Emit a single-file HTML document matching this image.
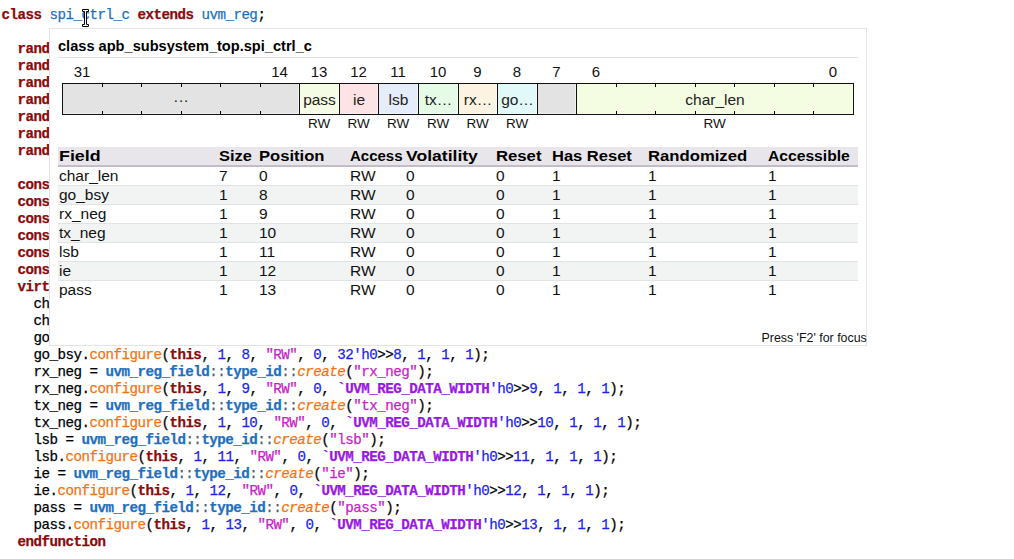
<!DOCTYPE html>
<html><head><meta charset="utf-8">
<style>
*{margin:0;padding:0;box-sizing:border-box}
html,body{width:1014px;height:559px;overflow:hidden;background:#fff}
body{position:relative}
.ln{position:absolute;left:1.5px;height:17px;line-height:17px;white-space:pre;font-family:"Liberation Mono",monospace;font-size:14.2px;letter-spacing:-0.52px;color:#000;-webkit-text-stroke:0.25px currentColor}
.k{color:#8b0a0a;font-weight:bold}
.t{color:#1f6fc0}
.tb{color:#1f6fc0;font-weight:bold}
.m{color:#f5730f;font-style:normal}
i.m{font-style:italic}
.n{color:#1e1ef0}
.s{color:#c822c8}
.mac{color:#9a18e6;font-weight:bold}
.op{color:#4a6070}
#tip{position:absolute;left:49px;top:28px;width:818px;height:318px;background:#fff;border:1px solid #e4e4e4;font-family:"Liberation Sans",sans-serif;color:#111}
#tip .in{position:absolute;left:-50px;top:-29px}
.title{position:absolute;left:58px;top:37px;font-weight:bold;font-size:14.6px;line-height:18px;white-space:nowrap;color:#000}
.sep{position:absolute;left:58px;top:57px;width:800px;height:1px;background:#e2e2e2}
.bx{position:absolute;border:1px solid #111;text-align:center;font-size:15.5px;line-height:29px;padding-top:1px;color:#222;box-shadow:inset -1px -1px 0 rgba(255,255,255,.5)}
.tk{position:absolute;width:1px;height:3px;background:#000}
.num{position:absolute;top:64px;height:16px;line-height:16px;text-align:center;font-size:15px;color:#111}
.acc{position:absolute;top:116px;height:16px;line-height:16px;text-align:center;font-size:13.5px;color:#111}
.th{position:absolute;left:58px;top:147px;width:800px;height:20px;background:#e8e6ea;border-bottom:2px solid #c4bcc8}
.hc{position:absolute;top:147px;height:18px;line-height:18px;font-weight:bold;font-size:14px;white-space:nowrap;color:#000;transform-origin:0 0}
.tr{position:absolute;left:58px;width:800px;height:19px;border-top:1px solid #e0e4e4}
.tr.alt{background:#f2f4f4}
.td{position:absolute;height:19px;line-height:19px;font-size:15.5px;white-space:nowrap;color:#111}
.f2{position:absolute;left:761.5px;top:330px;font-size:12.4px;line-height:16px;white-space:nowrap;color:#111}
</style></head><body>
<div class="ln" style="top:7px"><b class="k">class</b> <span class="t">spi_ctrl_c</span> <b class="k">extends</b> <span class="t">uvm_reg</span>;</div>
<div class="ln" style="top:24px"></div>
<div class="ln" style="top:41px">  <b class="k">rand</b> <span class="t">uvm_reg_field</span> char_len;</div>
<div class="ln" style="top:58px">  <b class="k">rand</b> <span class="t">uvm_reg_field</span> go_bsy;</div>
<div class="ln" style="top:75px">  <b class="k">rand</b> <span class="t">uvm_reg_field</span> rx_neg;</div>
<div class="ln" style="top:92px">  <b class="k">rand</b> <span class="t">uvm_reg_field</span> tx_neg;</div>
<div class="ln" style="top:109px">  <b class="k">rand</b> <span class="t">uvm_reg_field</span> lsb;</div>
<div class="ln" style="top:126px">  <b class="k">rand</b> <span class="t">uvm_reg_field</span> ie;</div>
<div class="ln" style="top:143px">  <b class="k">rand</b> <span class="t">uvm_reg_field</span> pass;</div>
<div class="ln" style="top:160px"></div>
<div class="ln" style="top:177px">  <b class="k">constraint</b> c_char_len { char_len.value == 0; }</div>
<div class="ln" style="top:194px">  <b class="k">constraint</b> c_go_bsy { go_bsy.value == 0; }</div>
<div class="ln" style="top:211px">  <b class="k">constraint</b> c_rx_neg { rx_neg.value == 0; }</div>
<div class="ln" style="top:228px">  <b class="k">constraint</b> c_tx_neg { tx_neg.value == 0; }</div>
<div class="ln" style="top:245px">  <b class="k">constraint</b> c_lsb { lsb.value == 0; }</div>
<div class="ln" style="top:262px">  <b class="k">constraint</b> c_ie { ie.value == 0; }</div>
<div class="ln" style="top:279px">  <b class="k">virtual</b> <b class="k">function</b> <b class="k">void</b> build();</div>
<div class="ln" style="top:296px">    char_len = <b class="tb">uvm_reg_field</b><span class="op">::</span><b class="tb">type_id</b><span class="op">::</span><i class="m">create</i>(<span class="s">"char_len"</span>);</div>
<div class="ln" style="top:313px">    char_len.<span class="m">configure</span>(<b class="k">this</b>, <span class="n">7</span>, <span class="n">0</span>, <span class="s">"RW"</span>, <span class="n">0</span>, <b class="mac">`UVM_REG_DATA_WIDTH</b><span class="n">'h0</span>&gt;&gt;<span class="n">0</span>, <span class="n">1</span>, <span class="n">1</span>, <span class="n">1</span>);</div>
<div class="ln" style="top:330px">    go_bsy = <b class="tb">uvm_reg_field</b><span class="op">::</span><b class="tb">type_id</b><span class="op">::</span><i class="m">create</i>(<span class="s">"go_bsy"</span>);</div>
<div class="ln" style="top:347px">    go_bsy.<span class="m">configure</span>(<b class="k">this</b>, <span class="n">1</span>, <span class="n">8</span>, <span class="s">"RW"</span>, <span class="n">0</span>, <span class="n">32'h0</span>&gt;&gt;<span class="n">8</span>, <span class="n">1</span>, <span class="n">1</span>, <span class="n">1</span>);</div>
<div class="ln" style="top:364px">    rx_neg = <b class="tb">uvm_reg_field</b><span class="op">::</span><b class="tb">type_id</b><span class="op">::</span><i class="m">create</i>(<span class="s">"rx_neg"</span>);</div>
<div class="ln" style="top:381px">    rx_neg.<span class="m">configure</span>(<b class="k">this</b>, <span class="n">1</span>, <span class="n">9</span>, <span class="s">"RW"</span>, <span class="n">0</span>, <b class="mac">`UVM_REG_DATA_WIDTH</b><span class="n">'h0</span>&gt;&gt;<span class="n">9</span>, <span class="n">1</span>, <span class="n">1</span>, <span class="n">1</span>);</div>
<div class="ln" style="top:398px">    tx_neg = <b class="tb">uvm_reg_field</b><span class="op">::</span><b class="tb">type_id</b><span class="op">::</span><i class="m">create</i>(<span class="s">"tx_neg"</span>);</div>
<div class="ln" style="top:415px">    tx_neg.<span class="m">configure</span>(<b class="k">this</b>, <span class="n">1</span>, <span class="n">10</span>, <span class="s">"RW"</span>, <span class="n">0</span>, <b class="mac">`UVM_REG_DATA_WIDTH</b><span class="n">'h0</span>&gt;&gt;<span class="n">10</span>, <span class="n">1</span>, <span class="n">1</span>, <span class="n">1</span>);</div>
<div class="ln" style="top:432px">    lsb = <b class="tb">uvm_reg_field</b><span class="op">::</span><b class="tb">type_id</b><span class="op">::</span><i class="m">create</i>(<span class="s">"lsb"</span>);</div>
<div class="ln" style="top:449px">    lsb.<span class="m">configure</span>(<b class="k">this</b>, <span class="n">1</span>, <span class="n">11</span>, <span class="s">"RW"</span>, <span class="n">0</span>, <b class="mac">`UVM_REG_DATA_WIDTH</b><span class="n">'h0</span>&gt;&gt;<span class="n">11</span>, <span class="n">1</span>, <span class="n">1</span>, <span class="n">1</span>);</div>
<div class="ln" style="top:466px">    ie = <b class="tb">uvm_reg_field</b><span class="op">::</span><b class="tb">type_id</b><span class="op">::</span><i class="m">create</i>(<span class="s">"ie"</span>);</div>
<div class="ln" style="top:483px">    ie.<span class="m">configure</span>(<b class="k">this</b>, <span class="n">1</span>, <span class="n">12</span>, <span class="s">"RW"</span>, <span class="n">0</span>, <b class="mac">`UVM_REG_DATA_WIDTH</b><span class="n">'h0</span>&gt;&gt;<span class="n">12</span>, <span class="n">1</span>, <span class="n">1</span>, <span class="n">1</span>);</div>
<div class="ln" style="top:500px">    pass = <b class="tb">uvm_reg_field</b><span class="op">::</span><b class="tb">type_id</b><span class="op">::</span><i class="m">create</i>(<span class="s">"pass"</span>);</div>
<div class="ln" style="top:517px">    pass.<span class="m">configure</span>(<b class="k">this</b>, <span class="n">1</span>, <span class="n">13</span>, <span class="s">"RW"</span>, <span class="n">0</span>, <b class="mac">`UVM_REG_DATA_WIDTH</b><span class="n">'h0</span>&gt;&gt;<span class="n">13</span>, <span class="n">1</span>, <span class="n">1</span>, <span class="n">1</span>);</div>
<div class="ln" style="top:534px">  <b class="k">endfunction</b></div>
<div id="tip"><div class="in">
<div class="title">class apb_subsystem_top.spi_ctrl_c</div>
<div class="sep"></div>
<div class="bx" style="left:62px;top:83px;width:238px;height:32px;background:#e3e3e3"><span class="bl">&middot;&middot;&middot;</span></div>
<div class="tk" style="left:102px;top:84px"></div>
<div class="tk" style="left:102px;top:111px"></div>
<div class="tk" style="left:141px;top:84px"></div>
<div class="tk" style="left:141px;top:111px"></div>
<div class="tk" style="left:181px;top:84px"></div>
<div class="tk" style="left:181px;top:111px"></div>
<div class="tk" style="left:220px;top:84px"></div>
<div class="tk" style="left:220px;top:111px"></div>
<div class="tk" style="left:260px;top:84px"></div>
<div class="tk" style="left:260px;top:111px"></div>
<div class="bx" style="left:299px;top:83px;width:41px;height:32px;background:#f5fce6"><span class="bl">pass</span></div>
<div class="acc" style="left:299px;width:40px">RW</div>
<div class="bx" style="left:339px;top:83px;width:40px;height:32px;background:#fde3e6"><span class="bl">ie</span></div>
<div class="acc" style="left:339px;width:39px">RW</div>
<div class="bx" style="left:378px;top:83px;width:41px;height:32px;background:#e5ecfa"><span class="bl">lsb</span></div>
<div class="acc" style="left:378px;width:40px">RW</div>
<div class="bx" style="left:418px;top:83px;width:41px;height:32px;background:#e6fbe6"><span class="bl">tx&hellip;</span></div>
<div class="acc" style="left:418px;width:40px">RW</div>
<div class="bx" style="left:458px;top:83px;width:40px;height:32px;background:#fdf3e2"><span class="bl">rx&hellip;</span></div>
<div class="acc" style="left:458px;width:39px">RW</div>
<div class="bx" style="left:497px;top:83px;width:41px;height:32px;background:#e2f9fa"><span class="bl">go&hellip;</span></div>
<div class="acc" style="left:497px;width:40px">RW</div>
<div class="bx" style="left:537px;top:83px;width:40px;height:32px;background:#e3e3e3"></div>
<div class="bx" style="left:576px;top:83px;width:278px;height:32px;background:#f4fde2"><span class="bl">char_len</span></div>
<div class="tk" style="left:616px;top:84px"></div>
<div class="tk" style="left:616px;top:111px"></div>
<div class="tk" style="left:655px;top:84px"></div>
<div class="tk" style="left:655px;top:111px"></div>
<div class="tk" style="left:695px;top:84px"></div>
<div class="tk" style="left:695px;top:111px"></div>
<div class="tk" style="left:734px;top:84px"></div>
<div class="tk" style="left:734px;top:111px"></div>
<div class="tk" style="left:774px;top:84px"></div>
<div class="tk" style="left:774px;top:111px"></div>
<div class="tk" style="left:813px;top:84px"></div>
<div class="tk" style="left:813px;top:111px"></div>
<div class="acc" style="left:576px;width:277px">RW</div>
<div class="num" style="left:62px;width:40px">31</div>
<div class="num" style="left:260px;width:39px">14</div>
<div class="num" style="left:299px;width:40px">13</div>
<div class="num" style="left:339px;width:39px">12</div>
<div class="num" style="left:378px;width:40px">11</div>
<div class="num" style="left:418px;width:40px">10</div>
<div class="num" style="left:458px;width:39px">9</div>
<div class="num" style="left:497px;width:40px">8</div>
<div class="num" style="left:537px;width:39px">7</div>
<div class="num" style="left:576px;width:40px">6</div>
<div class="num" style="left:813px;width:40px">0</div>
<div class="th"></div>
<div class="hc" style="left:59px;transform:scaleX(1.2742)">Field</div>
<div class="hc" style="left:219px;transform:scaleX(1.1741)">Size</div>
<div class="hc" style="left:259px;transform:scaleX(1.1852)">Position</div>
<div class="hc" style="left:350px;transform:scaleX(1.0714)">Access</div>
<div class="hc" style="left:406px;transform:scaleX(1.2544)">Volatility</div>
<div class="hc" style="left:496px;transform:scaleX(1.1919)">Reset</div>
<div class="hc" style="left:552px;transform:scaleX(1.1791)">Has Reset</div>
<div class="hc" style="left:648px;transform:scaleX(1.1915)">Randomized</div>
<div class="hc" style="left:768px;transform:scaleX(1.1178)">Accessible</div>
<div class="tr" style="top:166px;border-top:0"></div>
<div class="td" style="left:59px;top:166px">char_len</div>
<div class="td" style="left:219px;top:166px">7</div>
<div class="td" style="left:259px;top:166px">0</div>
<div class="td" style="left:350px;top:166px">RW</div>
<div class="td" style="left:406px;top:166px">0</div>
<div class="td" style="left:496px;top:166px">0</div>
<div class="td" style="left:552px;top:166px">1</div>
<div class="td" style="left:648px;top:166px">1</div>
<div class="td" style="left:768px;top:166px">1</div>
<div class="tr alt" style="top:185px"></div>
<div class="td" style="left:59px;top:185px">go_bsy</div>
<div class="td" style="left:219px;top:185px">1</div>
<div class="td" style="left:259px;top:185px">8</div>
<div class="td" style="left:350px;top:185px">RW</div>
<div class="td" style="left:406px;top:185px">0</div>
<div class="td" style="left:496px;top:185px">0</div>
<div class="td" style="left:552px;top:185px">1</div>
<div class="td" style="left:648px;top:185px">1</div>
<div class="td" style="left:768px;top:185px">1</div>
<div class="tr" style="top:204px"></div>
<div class="td" style="left:59px;top:204px">rx_neg</div>
<div class="td" style="left:219px;top:204px">1</div>
<div class="td" style="left:259px;top:204px">9</div>
<div class="td" style="left:350px;top:204px">RW</div>
<div class="td" style="left:406px;top:204px">0</div>
<div class="td" style="left:496px;top:204px">0</div>
<div class="td" style="left:552px;top:204px">1</div>
<div class="td" style="left:648px;top:204px">1</div>
<div class="td" style="left:768px;top:204px">1</div>
<div class="tr alt" style="top:223px"></div>
<div class="td" style="left:59px;top:223px">tx_neg</div>
<div class="td" style="left:219px;top:223px">1</div>
<div class="td" style="left:259px;top:223px">10</div>
<div class="td" style="left:350px;top:223px">RW</div>
<div class="td" style="left:406px;top:223px">0</div>
<div class="td" style="left:496px;top:223px">0</div>
<div class="td" style="left:552px;top:223px">1</div>
<div class="td" style="left:648px;top:223px">1</div>
<div class="td" style="left:768px;top:223px">1</div>
<div class="tr" style="top:242px"></div>
<div class="td" style="left:59px;top:242px">lsb</div>
<div class="td" style="left:219px;top:242px">1</div>
<div class="td" style="left:259px;top:242px">11</div>
<div class="td" style="left:350px;top:242px">RW</div>
<div class="td" style="left:406px;top:242px">0</div>
<div class="td" style="left:496px;top:242px">0</div>
<div class="td" style="left:552px;top:242px">1</div>
<div class="td" style="left:648px;top:242px">1</div>
<div class="td" style="left:768px;top:242px">1</div>
<div class="tr alt" style="top:261px"></div>
<div class="td" style="left:59px;top:261px">ie</div>
<div class="td" style="left:219px;top:261px">1</div>
<div class="td" style="left:259px;top:261px">12</div>
<div class="td" style="left:350px;top:261px">RW</div>
<div class="td" style="left:406px;top:261px">0</div>
<div class="td" style="left:496px;top:261px">0</div>
<div class="td" style="left:552px;top:261px">1</div>
<div class="td" style="left:648px;top:261px">1</div>
<div class="td" style="left:768px;top:261px">1</div>
<div class="tr" style="top:280px"></div>
<div class="td" style="left:59px;top:280px">pass</div>
<div class="td" style="left:219px;top:280px">1</div>
<div class="td" style="left:259px;top:280px">13</div>
<div class="td" style="left:350px;top:280px">RW</div>
<div class="td" style="left:406px;top:280px">0</div>
<div class="td" style="left:496px;top:280px">0</div>
<div class="td" style="left:552px;top:280px">1</div>
<div class="td" style="left:648px;top:280px">1</div>
<div class="td" style="left:768px;top:280px">1</div>
<div class="f2">Press 'F2' for focus</div>
</div></div>
<svg style="position:absolute;left:82px;top:9px" width="7" height="18" viewBox="0 0 7 18">
<path d="M0.5 0.5 H6.5 V2.5 H4.5 V15.5 H6.5 V17.5 H0.5 V15.5 H2.5 V2.5 H0.5 Z" fill="#fff" stroke="#000" stroke-width="1" stroke-linejoin="round"/>
</svg>
</body></html>
